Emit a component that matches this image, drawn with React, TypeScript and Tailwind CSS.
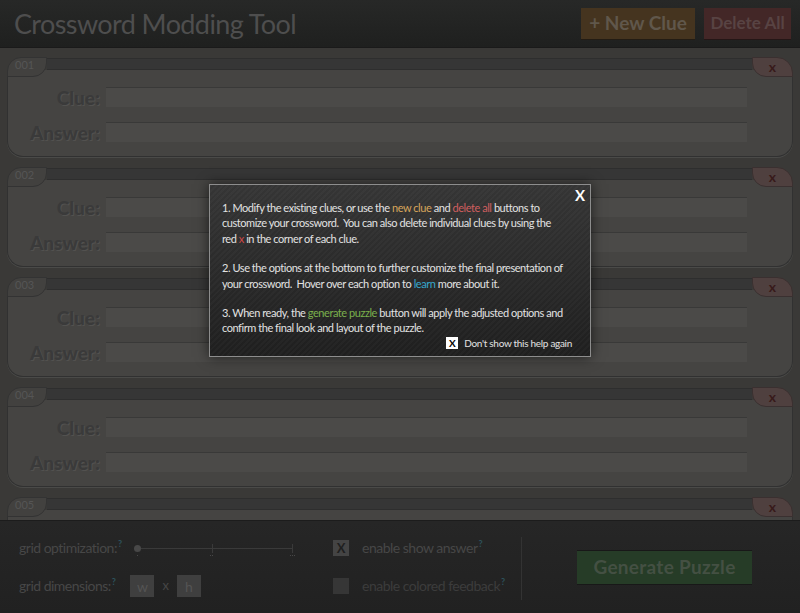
import React from "react";

// crossword modding tool with the help dialog open over it

const cards = ["001", "002", "003", "004", "005"];

export default function App() {
  return (
    <div className="relative h-[613px] w-[800px] overflow-hidden bg-[#3a3937] font-['Lato',sans-serif]">
      {/* Top bar */}
      <header className="flex h-[48px] items-center justify-between border-b border-[#1a1a1a] bg-gradient-to-b from-[#272827] to-[#1f201f] pl-[14px] pr-[9px]">
        <h1 className="text-[27px] leading-none tracking-[-0.6px] text-[#4e4e4e]">Crossword Modding Tool</h1>
        <div className="flex gap-[9px]">
          <button className="h-[32px] w-[114px] border-b border-[#231c14] bg-[#45341f] text-[19px] font-bold text-[#60574b]">
            + New Clue
          </button>
          <button className="h-[32px] w-[87px] border-b border-[#241616] bg-[#432727] text-[17px] font-bold text-[#584343]">
            Delete All
          </button>
        </div>
      </header>

      {/* Clue list */}
      <main className="flex h-[472px] flex-col gap-[10px] overflow-hidden px-[7px] pt-[9px]">
        {cards.map((id) => (
          <ClueCard key={id} id={id} />
        ))}
      </main>

      {/* Options bar */}
      <footer className="flex h-[93px] border-t border-[#1c1c1c] bg-gradient-to-b from-[#262626] to-[#212121] pl-[19px] text-[#464646]">
        <div className="flex w-[314px] flex-col gap-[18px] pt-[17px]">
          <div className="flex h-[20px] items-center">
            <OptionLabel text="grid optimization:" />
            <Slider />
          </div>
          <div className="flex h-[20px] items-center">
            <OptionLabel text="grid dimensions:" />
            <div className="ml-[15px] flex items-center">
              <div className="flex h-[22px] w-[24px] items-center justify-center bg-[#3f3f3f] text-[14px] text-[#545454]">w</div>
              <span className="mx-[8px] text-[13px]">x</span>
              <div className="flex h-[22px] w-[24px] items-center justify-center bg-[#3f3f3f] text-[14px] text-[#545454]">h</div>
            </div>
          </div>
        </div>
        <div className="flex w-[188px] flex-col gap-[22px] pt-[19px]">
          <div className="flex h-[16px] items-center gap-[13px]">
            <div className="flex h-[16px] w-[16px] items-center justify-center bg-[#444] text-[13px] font-bold leading-none text-[#1f1f1f]">
              X
            </div>
            <OptionLabel text="enable show answer" />
          </div>
          <div className="flex h-[16px] items-center gap-[13px]">
            <div className="h-[16px] w-[16px] bg-[#363636]" />
            <OptionLabel text="enable colored feedback" dim />
          </div>
        </div>
        <div className="mt-[16px] h-[63px] w-px bg-[#333]" />
        <div className="pl-[55px] pt-[29px]">
          <button className="h-[35px] w-[175px] border-y border-[#181818] bg-[#263c27] text-[19px] font-bold tracking-[0.3px] text-[#445043]">
            Generate Puzzle
          </button>
        </div>
      </footer>

      {/* Help dialog */}
      <div className="absolute left-[209px] top-[184px] w-[382px] border border-[#8d8d8d] bg-[image:repeating-linear-gradient(135deg,rgba(255,255,255,0.025)_0px,rgba(255,255,255,0.025)_2px,transparent_2px,transparent_4px),linear-gradient(to_bottom,#353535,#1f1f1f)] px-[12px] pb-[5px] pt-[15px] text-[11px] leading-[15.3px] tracking-[-0.45px] whitespace-nowrap text-[#e2e2e2] shadow-[0_0_12px_rgba(0,0,0,0.6)]">
        <button className="absolute right-[5px] top-[3px] text-[15px] font-bold tracking-normal text-white">X</button>
        <p>
          1. Modify the existing clues, or use the <span className="text-[#d7a55b]">new clue</span> and{" "}
          <span className="text-[#d05e5e]">delete all</span> buttons to
          <br />
          customize your crossword.&nbsp; You can also delete individual clues by using the
          <br />
          red <span className="text-[#d04848]">x</span> in the corner of each clue.
        </p>
        <p className="mt-[14.5px]">
          2. Use the options at the bottom to further customize the final presentation of
          <br />
          your crossword.&nbsp; Hover over each option to <span className="text-[#36a6cc]">learn</span> more about it.
        </p>
        <p className="mt-[14px]">
          3. When ready, the <span className="text-[#7bb04c]">generate puzzle</span> button will apply the adjusted options and
          <br />
          confirm the final look and layout of the puzzle.
        </p>
        <div className="flex items-center justify-end gap-[6px] pr-[6px]">
          <div className="flex h-[12px] w-[12px] items-center justify-center bg-white text-[10px] font-bold leading-none tracking-normal text-black">
            X
          </div>
          <span className="text-[10px] tracking-[-0.3px]">Don't show this help again</span>
        </div>
      </div>
    </div>
  );
}

// ============= UI Partials ============= //
function ClueCard({ id }: { id: string }) {
  return (
    <div className="flex h-[100px] shrink-0 flex-col">
      <div className="flex h-[13px]">
        <div className="relative z-10 h-[20px] w-[40px] rounded-tl-[14px] rounded-br-[14px] border border-[#333] bg-[#42413f] pl-[7px] text-[11px] leading-[14px] text-[#555]">
          {id}
        </div>
        <div className="mt-[1px] h-[12px] flex-1 border-y border-[#2e2e2e] bg-[#363636]" />
        <div className="relative z-10 flex h-[20px] w-[41px] items-start justify-center rounded-tr-[16px] rounded-bl-[14px] border border-[#3a3030] bg-[#4f403f] pt-[2px] text-[14px] font-bold leading-none text-[#381a1a]">
          x
        </div>
      </div>
      <div className="grid flex-1 grid-cols-[92px_1fr] content-start items-center gap-x-[6px] gap-y-[15px] rounded-b-[16px] border border-t-0 border-[#313131] bg-[#454442] pr-[45px] pt-[17px] shadow-[0_1px_0_#4a4a48]">
        <Label text="Clue:" />
        <Field />
        <Label text="Answer:" />
        <Field />
      </div>
    </div>
  );
}

function Label({ text }: { text: string }) {
  return (
    <span className="text-right text-[19px] font-black leading-none text-[#3a3a3a] [text-shadow:1px_1px_0_#52514f]">
      {text}
    </span>
  );
}

function Field() {
  return <div className="h-[20px] border-t border-[#393938] bg-[#4b4a48]" />;
}

function OptionLabel({ text, dim = false }: { text: string; dim?: boolean }) {
  return (
    <span className={"flex items-start whitespace-nowrap text-[14px] leading-[18px] tracking-[-0.5px] " + (dim ? "text-[#3c3c3c]" : "text-[#474747]")}>
      {text}
      <span className="ml-[1px] text-[9px] font-bold leading-[9px] text-[#2d525c]">?</span>
    </span>
  );
}

function Slider() {
  return (
    <div className="relative ml-[12px] h-[20px] w-[162px]">
      <div className="absolute left-[3px] right-[3px] top-[10px] h-px bg-[#3a3a3a]" />
      <div className="absolute left-0 top-[7px] h-[7px] w-[7px] rounded-full bg-[#484848]" />
      <div className="absolute left-[78px] top-[6px] h-[9px] w-px bg-[#3a3a3a]" />
      <div className="absolute right-[3px] top-[6px] h-[9px] w-px bg-[#3a3a3a]" />
      <div className="absolute left-[3px] top-[17px] h-px w-px bg-[#484848]" />
      <div className="absolute left-[76px] top-[17px] flex gap-px">
        <span className="h-px w-px bg-[#484848]" />
        <span className="h-px w-px bg-[#484848]" />
      </div>
      <div className="absolute right-[1px] top-[17px] flex gap-px">
        <span className="h-px w-px bg-[#484848]" />
        <span className="h-px w-px bg-[#484848]" />
        <span className="h-px w-px bg-[#484848]" />
      </div>
    </div>
  );
}
